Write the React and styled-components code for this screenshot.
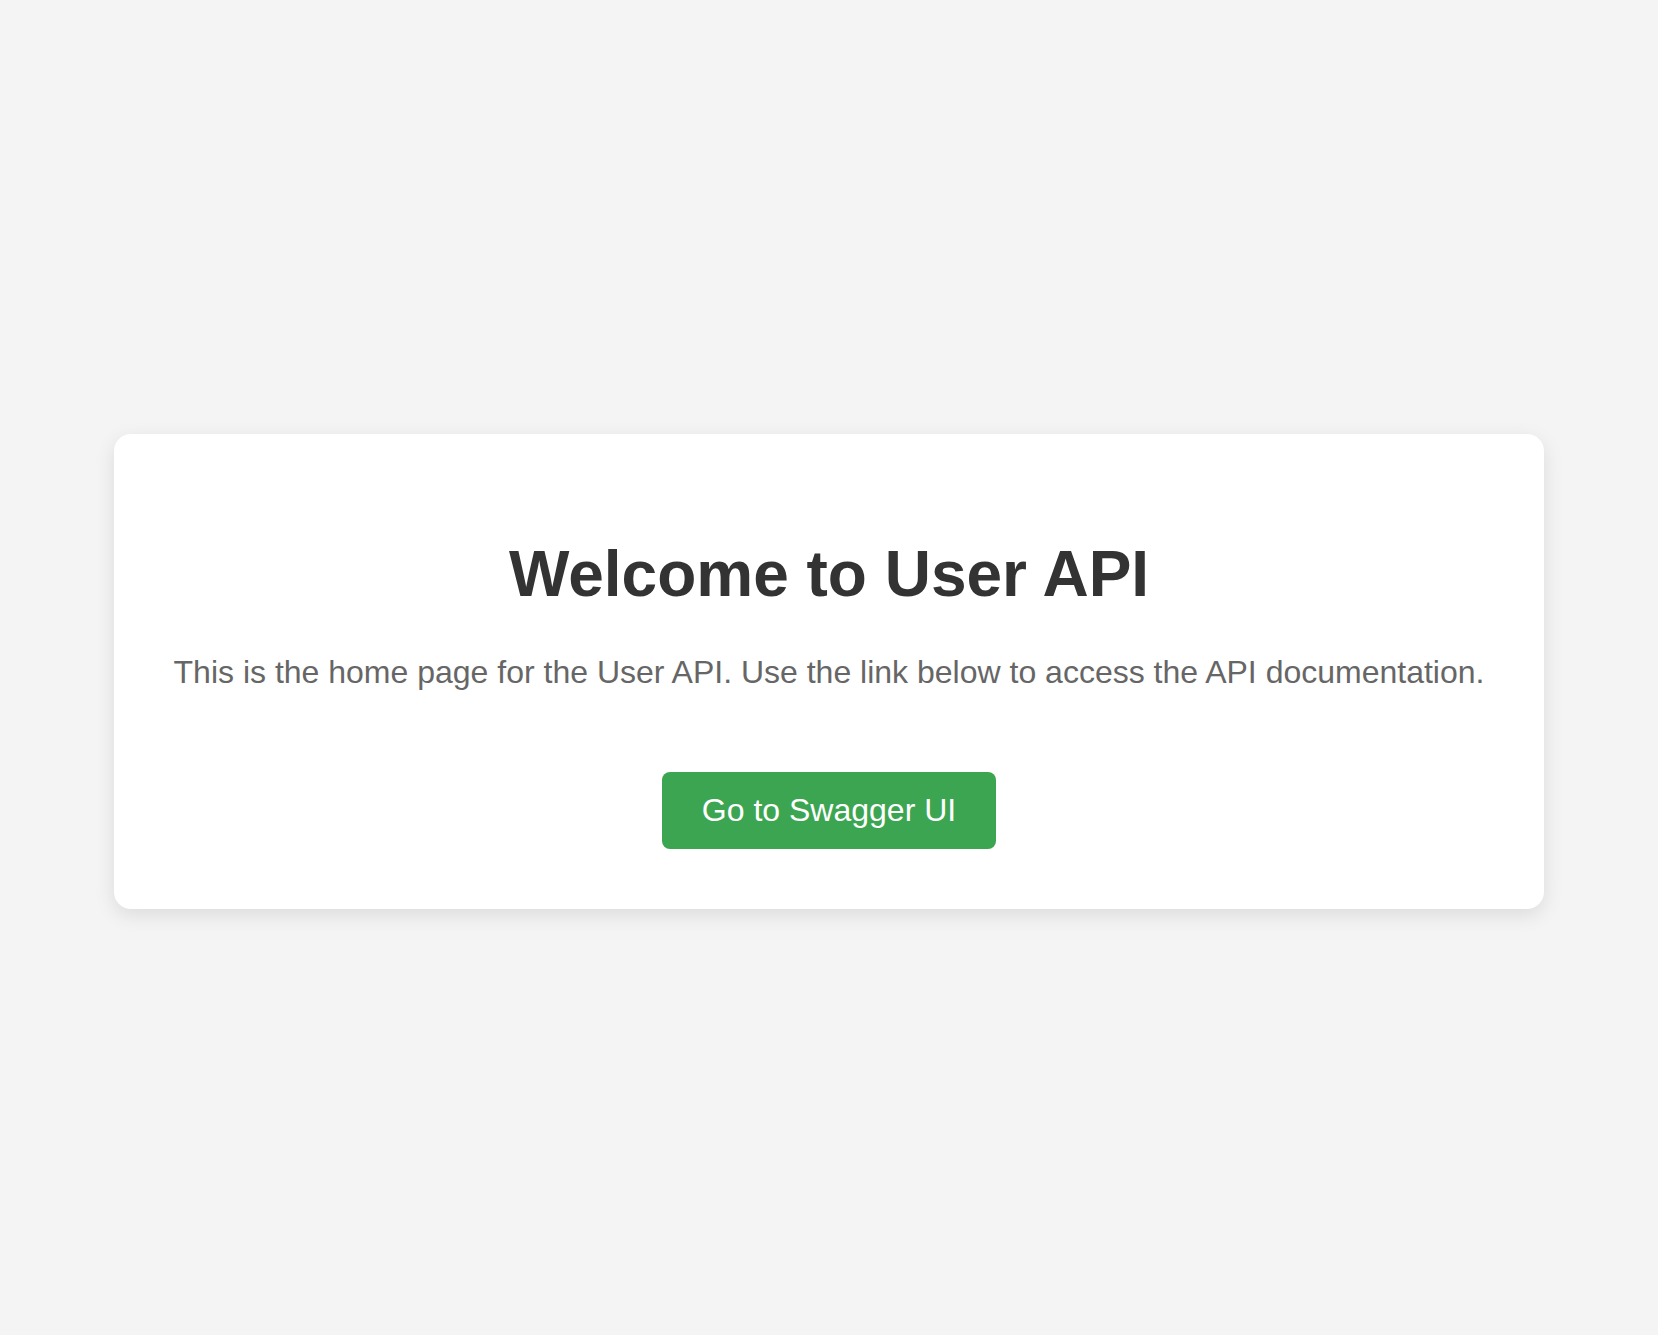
import styled, { createGlobalStyle } from 'styled-components';

const GlobalStyle = createGlobalStyle`
  body {
    margin: 4px 8px 8px;
    background-color: #f4f4f4;
    font-family: 'Liberation Sans', Arial, sans-serif;
  }
`;

const Page = styled.div`
  min-height: 100vh;
  display: flex;
  align-items: center;
  justify-content: center;
`;

const Card = styled.div`
  box-sizing: border-box;
  width: 100%;
  max-width: 1430px;
  padding: 60px 50px;
  background-color: #fff;
  border-radius: 17px;
  box-shadow: 0 6px 20px rgba(0, 0, 0, 0.1);
  text-align: center;
`;

const Title = styled.h1`
  margin: 0.67em 0;
  font-size: 64px;
  font-weight: bold;
  color: #333;
`;

const Intro = styled.p`
  margin: 0 0 81px;
  font-size: 32px;
  color: #666;
`;

const SwaggerLink = styled.a`
  display: inline-block;
  padding: 20px 40px;
  font-size: 32px;
  color: #fff;
  background-color: #3ca551;
  border-radius: 8px;
  text-decoration: none;
`;

const App = () => {
  return (
    <>
      <GlobalStyle />
      <Page>
        <Card>
          <Title>Welcome to User API</Title>
          <Intro>
            This is the home page for the User API. Use the link below to access the API documentation.
          </Intro>
          <SwaggerLink href='#swagger'>Go to Swagger UI</SwaggerLink>
        </Card>
      </Page>
    </>
  );
};

export default App;
